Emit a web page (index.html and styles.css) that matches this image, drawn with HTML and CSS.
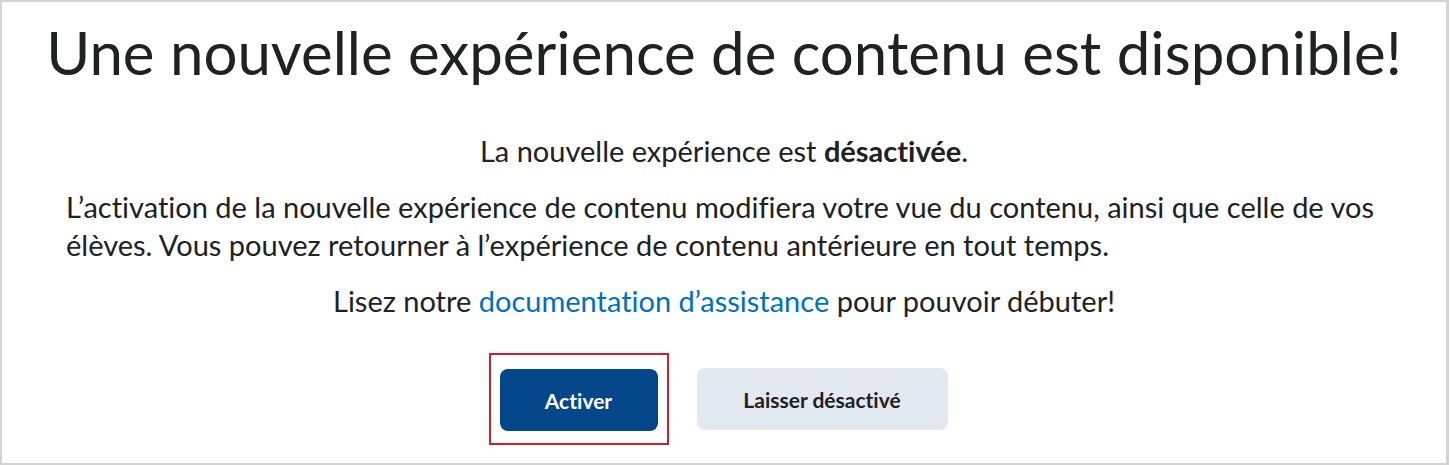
FILE: index.html
```html
<!DOCTYPE html>
<html lang="fr">
<head>
    <meta charset="UTF-8">
    <meta name="viewport" content="width=device-width, initial-scale=1.0">
    <title>Nouvelle expérience de contenu</title>
    <link rel="stylesheet" href="styles.css">
</head>
<body>
    <div class="frame">
        <h1>Une nouvelle expérience de contenu est disponible!</h1>
        <div class="content">
            <p class="center">La nouvelle expérience est <strong>désactivée</strong>.</p>
            <p>L’activation de la nouvelle expérience de contenu modifiera votre vue du contenu, ainsi que celle de vos élèves. Vous pouvez retourner à l’expérience de contenu antérieure en tout temps.</p>
            <p class="center">Lisez notre <a href="#">documentation d’assistance</a> pour pouvoir débuter!</p>
        </div>
        <div class="actions">
            <span class="highlight">
                <button class="btn primary">Activer</button>
            </span>
            <button class="btn secondary">Laisser désactivé</button>
        </div>
    </div>
</body>
</html>
```

FILE: styles.css
```css
body {
    margin: 0;
    font-family: Lato, "Open Sans", sans-serif;
    font-variant-ligatures: none;
    color: #202122;
    background: #fff;
}
.frame {
    width: 1449px;
    height: 465px;
    box-sizing: border-box;
    border: 2px solid #d3d3d3;
    border-right-width: 3px;
    padding-top: 14px;
}
h1 {
    margin: 0;
    font-size: 60px;
    font-weight: 400;
    line-height: 72px;
    text-align: center;
    white-space: nowrap;
}
.content {
    margin-top: 44px;
    padding: 0 64px;
    font-size: 29px;
    line-height: 38px;
}
.content p {
    margin: 0 0 18px 0;
}
.center {
    text-align: center;
}
strong {
    font-weight: 700;
}
a {
    color: #006fbf;
    text-decoration: none;
}
.actions {
    display: flex;
    justify-content: center;
    align-items: center;
    gap: 28px;
    margin-top: 33px;
    padding-right: 12px;
}
.highlight {
    display: inline-flex;
    border: 2px solid #cd1f2d;
    padding: 14px 9px 12px 9px;
}
.btn {
    height: 62px;
    border: none;
    border-radius: 8px;
    font-family: Lato, "Open Sans", sans-serif;
    font-variant-ligatures: none;
    font-size: 21px;
    font-weight: 700;
    cursor: pointer;
}
.primary {
    width: 158px;
    background: #03468a;
    color: #fff;
}
.secondary {
    width: 251px;
    background: #e3e9f1;
    color: #202122;
}
```
